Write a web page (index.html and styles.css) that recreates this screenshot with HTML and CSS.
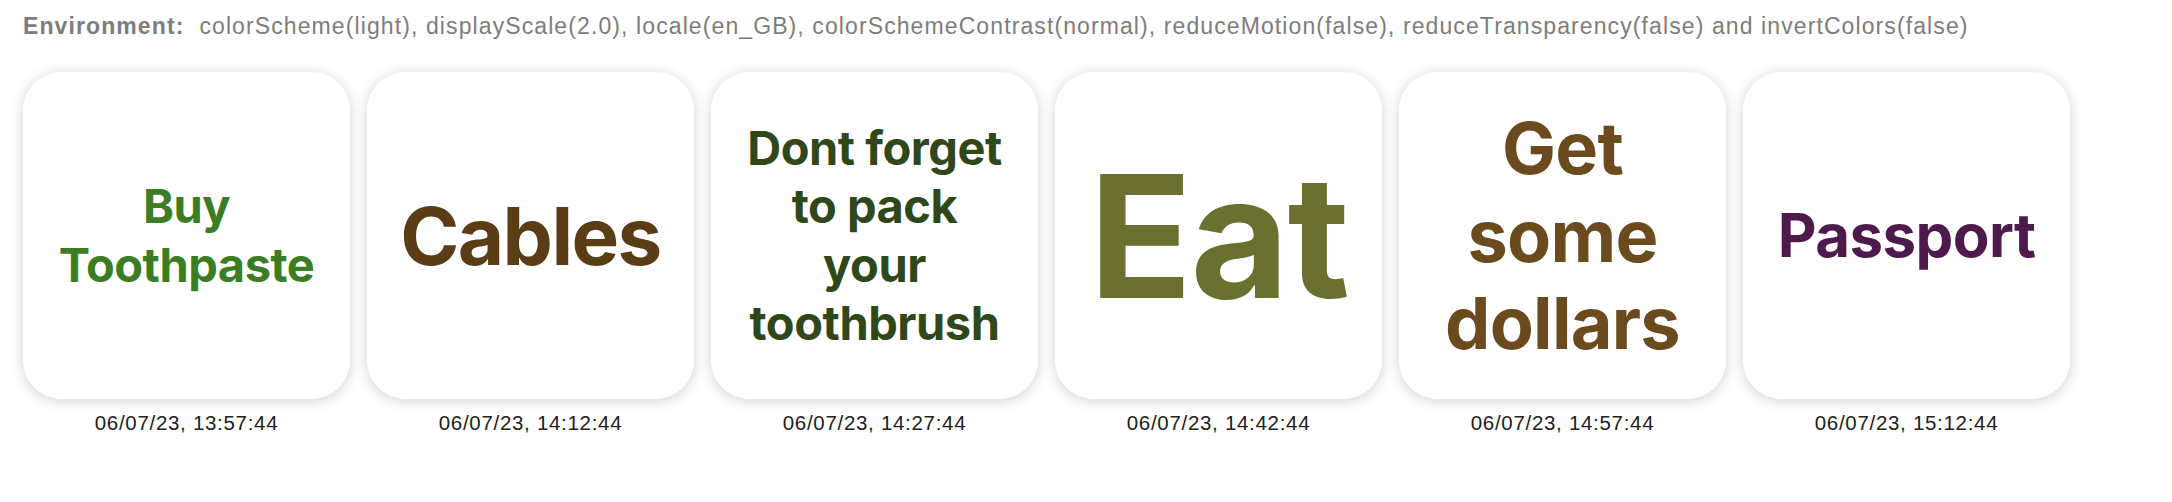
FILE: index.html
```html
<!DOCTYPE html>
<html lang="en">
<head>
<meta charset="utf-8">
<title>Preview</title>
<link rel="stylesheet" href="styles.css">
</head>
<body>
<div class="page">
  <p class="env"><span class="env-key">Environment:</span>&nbsp; colorScheme(light), displayScale(2.0), locale(en_GB), colorSchemeContrast(normal), reduceMotion(false), reduceTransparency(false) and invertColors(false)</p>
  <div class="row">
    <div class="item">
      <div class="card"><span class="label c1">Buy<br>Toothpaste</span></div>
      <div class="date">06/07/23, 13:57:44</div>
    </div>
    <div class="item">
      <div class="card"><span class="label c2">Cables</span></div>
      <div class="date">06/07/23, 14:12:44</div>
    </div>
    <div class="item">
      <div class="card"><span class="label c3">Dont forget<br>to pack<br>your<br>toothbrush</span></div>
      <div class="date">06/07/23, 14:27:44</div>
    </div>
    <div class="item">
      <div class="card"><span class="label c4">Eat</span></div>
      <div class="date">06/07/23, 14:42:44</div>
    </div>
    <div class="item">
      <div class="card"><span class="label c5">Get<br>some<br>dollars</span></div>
      <div class="date">06/07/23, 14:57:44</div>
    </div>
    <div class="item">
      <div class="card"><span class="label c6">Passport</span></div>
      <div class="date">06/07/23, 15:12:44</div>
    </div>
  </div>
</div>
</body>
</html>
```
FILE: styles.css
```css
html, body {
  margin: 0;
  padding: 0;
  background: #ffffff;
}

.page {
  padding: 12px 0 0 23px;
  font-family: "Liberation Sans", Arial, sans-serif;
}

.env {
  margin: 0;
  font-size: 23px;
  line-height: 28px;
  letter-spacing: 1.1px;
  color: #7d7d7d;
  white-space: nowrap;
}

.env-key {
  font-weight: 700;
}

.row {
  display: flex;
  gap: 17px;
  margin-top: 32px;
}

.item {
  display: flex;
  flex-direction: column;
  align-items: center;
  width: 327px;
}

.card {
  width: 327px;
  height: 327px;
  box-sizing: border-box;
  border-radius: 38px;
  background: #ffffff;
  box-shadow: 0 2px 14px rgba(0, 0, 0, 0.18);
  display: flex;
  align-items: center;
  justify-content: center;
  text-align: center;
}

.label {
  font-family: Inter, "Liberation Sans", sans-serif;
  font-weight: 700;
  line-height: 1.25;
  letter-spacing: -0.01em;
}

.c1 { font-size: 47px; color: #3b7d23; }
.c2 { font-size: 80px; color: #5a3c15; letter-spacing: -0.02em; }
.c3 { font-size: 47px; color: #2f481a; line-height: 1.24; }
.c4 { font-size: 170px; color: #6b7030; line-height: 1; }
.c5 { font-size: 72px; color: #6b4b1e; line-height: 1.22; }
.c6 { font-size: 60px; color: #4e1a4b; }

.date {
  margin-top: 12px;
  font-size: 20.5px;
  line-height: 24px;
  letter-spacing: 0.7px;
  color: #222222;
}
```
